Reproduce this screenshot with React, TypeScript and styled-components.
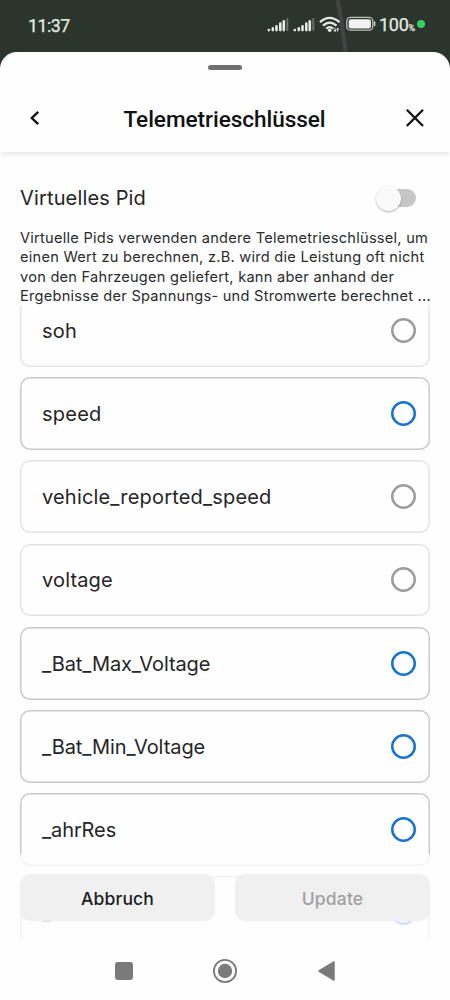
import React from 'react';
import styled, { createGlobalStyle } from 'styled-components';

const GlobalStyle = createGlobalStyle`
  * { box-sizing: border-box; }
  body { margin: 0; background: #2c352c; }
  button { border: 0; padding: 0; background: none; font: inherit; color: inherit; }
`;

const Screen = styled.div`
  width: 450px;
  height: 1000px;
  display: flex;
  flex-direction: column;
  overflow: hidden;
  background: #2c352c;
  color: #242527;
  font-family: Inter, 'Liberation Sans', sans-serif;
`;

const StatusBar = styled.div`
  position: relative;
  flex: none;
  height: 52px;
  padding: 0 25px 4px 28px;
  display: flex;
  align-items: center;
  justify-content: space-between;
  color: #e4eae4;
  font-family: Roboto, sans-serif;
`;

const Streak = styled.svg`
  position: absolute;
  left: 330px;
  top: 0;
`;

const Clock = styled.span`
  padding-top: 2px;
  font-size: 17.8px;
  font-weight: 400;
  letter-spacing: -0.5px;
  -webkit-text-stroke: 0.25px currentColor;
`;

const StatusIcons = styled.div`
  position: relative;
  display: flex;
  align-items: center;
`;

const Level = styled.span`
  display: flex;
  align-items: baseline;
  width: 35px;
  margin-left: 3px;
  padding-top: 1px;
  font-size: 18px;
  font-weight: 400;
  letter-spacing: -0.3px;
  -webkit-text-stroke: 0.25px currentColor;
`;

const Percent = styled.small`
  font-size: 9px;
`;

const LiveDot = styled.i`
  width: 8px;
  height: 8px;
  margin-left: 3px;
  border-radius: 50%;
  background: #35cf62;
`;

const Sheet = styled.main`
  flex: 1;
  min-height: 0;
  display: flex;
  flex-direction: column;
  background: #fefefe;
  border-radius: 17px 17px 0 0;
`;

const Handle = styled.div`
  flex: none;
  width: 34px;
  height: 5px;
  margin: 13px auto 0;
  border-radius: 3px;
  background: #707070;
`;

const Header = styled.header`
  flex: none;
  height: 82px;
  padding: 0 25px 0 24px;
  display: flex;
  align-items: center;
  justify-content: space-between;
  box-shadow: 0 3px 4px rgba(0, 0, 0, 0.08);
`;

const Title = styled.h1`
  margin: 16px 0 0;
  font: 500 22.6px Roboto, sans-serif;
  letter-spacing: -0.06px;
  color: #111214;
`;

const IconButton = styled.button`
  display: flex;
  margin-top: 13px;
`;

const ToggleRow = styled.div`
  flex: none;
  height: 74px;
  padding: 18px 34px 0 20px;
  display: flex;
  align-items: center;
  justify-content: space-between;
`;

const Label = styled.span`
  font-size: 20px;
  letter-spacing: 0.15px;
`;

const Track = styled.span`
  width: 36px;
  height: 18px;
  display: flex;
  align-items: center;
  border-radius: 9px;
  background: #c6c6c6;
`;

const Thumb = styled.i`
  flex: none;
  width: 25px;
  height: 25px;
  margin-left: -4px;
  border-radius: 50%;
  background: #fafafa;
  box-shadow: 0 1px 2px rgba(0, 0, 0, 0.3);
`;

const Description = styled.p`
  flex: none;
  height: 80px;
  margin: 0;
  padding: 2.5px 0 0 20px;
  font-size: 14.6px;
  line-height: 19.6px;
  letter-spacing: 0.25px;
  white-space: nowrap;
  color: #2a2b2d;
`;

const Body = styled.section`
  position: relative;
  flex: 1;
  min-height: 0;
  overflow: hidden;
`;

const List = styled.div`
  margin-top: -12px;
  padding: 0 20px;
  display: flex;
  flex-direction: column;
  gap: 10.4px;
`;

const Card = styled.div<{ $active: boolean }>`
  flex: none;
  height: 72.8px;
  padding: 0 14px 0 22px;
  display: flex;
  align-items: center;
  justify-content: space-between;
  box-shadow: inset 0 0 0 1.5px ${(p) => (p.$active ? '#c6c8ca' : '#e4e4e4')};
  border-radius: 10px;
`;

const Name = styled.span<{ $tracking: number }>`
  padding-top: 1px;
  font-size: 20px;
  letter-spacing: ${(p) => p.$tracking}px;
`;

const Radio = styled.i<{ $active: boolean }>`
  width: 25px;
  height: 25px;
  box-shadow: inset 0 0 0 2.5px ${(p) => (p.$active ? '#1773d2' : '#9c9c9c')};
  border-radius: 50%;
`;

const Footer = styled.footer`
  position: absolute;
  left: 0;
  right: 0;
  bottom: 0;
  height: 86px;
  padding: 20px 20px 19px;
  display: flex;
  gap: 20px;
  background: rgba(254, 254, 254, 0.8);
`;

const ActionButton = styled.button<{ $muted?: boolean }>`
  flex: 1;
  padding-top: 1px;
  border-radius: 10px;
  background: #f0f0f0;
  color: ${(p) => (p.$muted ? '#a0a0a0' : '#1b1c1e')};
  font-size: 17.5px;
  font-weight: 500;
  letter-spacing: 0.15px;
`;

const SystemNav = styled.nav`
  flex: none;
  height: 60px;
  padding-top: 1px;
  display: flex;
  justify-content: center;
  align-items: center;
  gap: 78.5px;
`;

const items = [
  { name: 'soh', active: false, tracking: 0.2 },
  { name: 'speed', active: true, tracking: 0.25 },
  { name: 'vehicle_reported_speed', active: false, tracking: 0.18 },
  { name: 'voltage', active: false, tracking: 0.15 },
  { name: '_Bat_Max_Voltage', active: true, tracking: -0.1 },
  { name: '_Bat_Min_Voltage', active: true, tracking: -0.08 },
  { name: '_ahrRes', active: true, tracking: -0.1 },
  { name: '_', active: true, tracking: 0 },
];

const SignalBars = () => (
  <svg width="26" height="16" viewBox="0 0 26 16" stroke="#e4eae4" strokeWidth="2.6" strokeLinecap="round">
    <path d="M1.8 14v.1M5.8 12.4v1.7M9.5 10.2v3.9M13.3 7.6v6.5M16.8 5.2v8.9" />
    <path d="M20.3 3v11.1" stroke="#69736a" strokeWidth="2" />
  </svg>
);

const Wifi = () => (
  <svg width="22" height="17" viewBox="0 0 22 17" fill="none" stroke="#e4eae4" strokeWidth="2.3">
    <path d="M1 6.2Q10.5-2.4 20.5 6.2M4 9.6Q10.7 3.6 17.5 9.6M7.2 12.7Q10.8 9.6 14.3 12.7" />
    <circle cx="10.7" cy="14.2" r="1.8" fill="#e4eae4" stroke="none" />
    <path d="M16 12v3.5M18.7 12v3.5M14.9 14l1.1 1.5 1-1.5M17.7 13.5l1-1.5 1 1.5" strokeWidth="1" />
  </svg>
);

const Battery = styled.svg`
  margin-left: 5px;
`;

export default function App() {
  return (
    <>
      <GlobalStyle />
      <Screen>
        <StatusBar>
          <Streak width="20" height="52"><path d="M7.5 0Q13 26 15.5 52" fill="none" stroke="#454247" strokeWidth="4" /></Streak>
          <Clock>11:37</Clock>
          <StatusIcons>
            <SignalBars /><SignalBars /><Wifi />
            <Battery width="30" height="16" viewBox="0 0 30 16">
              <rect x=".8" y="1.4" width="26" height="12.8" rx="3.6" fill="none" stroke="#b9c0b8" strokeWidth="1.3" />
              <rect x="2.7" y="3.2" width="22.2" height="9.2" rx="2" fill="#f1f2f1" />
              <path d="M28.6 6v3.5" stroke="#c6cbc5" strokeWidth="1.6" strokeLinecap="round" />
            </Battery>
            <Level>100<Percent>%</Percent></Level>
            <LiveDot />
          </StatusIcons>
        </StatusBar>
        <Sheet>
          <Handle />
          <Header>
            <IconButton aria-label="Zurück">
              <svg width="20" height="20" viewBox="0 0 20 20" fill="none" stroke="#111214" strokeWidth="2.4"><path d="M14.2 3.8 7.8 10l6.4 6.2" /></svg>
            </IconButton>
            <Title>Telemetrieschlüssel</Title>
            <IconButton aria-label="Schließen">
              <svg width="20" height="20" viewBox="0 0 20 20" fill="none" stroke="#111214" strokeWidth="2.3"><path d="m1.8 1.8 16.2 16.2M18 1.8 1.8 18" /></svg>
            </IconButton>
          </Header>
          <ToggleRow>
            <Label>Virtuelles Pid</Label>
            <Track><Thumb /></Track>
          </ToggleRow>
          <Description>
            Virtuelle Pids verwenden andere Telemetrieschlüssel, um<br />
            einen Wert zu berechnen, z.B. wird die Leistung oft nicht<br />
            von den Fahrzeugen geliefert, kann aber anhand der<br />
            Ergebnisse der Spannungs- und Stromwerte berechnet ...
          </Description>
          <Body>
            <List>
              {items.map((item) => (
                <Card key={item.name} $active={item.active}>
                  <Name $tracking={item.tracking}>{item.name}</Name>
                  <Radio $active={item.active} />
                </Card>
              ))}
            </List>
            <Footer>
              <ActionButton>Abbruch</ActionButton>
              <ActionButton $muted>Update</ActionButton>
            </Footer>
          </Body>
          <SystemNav>
            <svg width="20" height="20"><rect x="1" y="1" width="18" height="18" rx="3" fill="#7a7a7a" /></svg>
            <svg width="26" height="26"><circle cx="13" cy="13" r="11.1" fill="none" stroke="#7a7a7a" strokeWidth="1.8" /><circle cx="13" cy="13" r="7.2" fill="#7a7a7a" /></svg>
            <svg width="20" height="22"><path d="M2 11 17 2v18Z" fill="#7a7a7a" stroke="#7a7a7a" strokeWidth="1.5" strokeLinejoin="round" /></svg>
          </SystemNav>
        </Sheet>
      </Screen>
    </>
  );
}
